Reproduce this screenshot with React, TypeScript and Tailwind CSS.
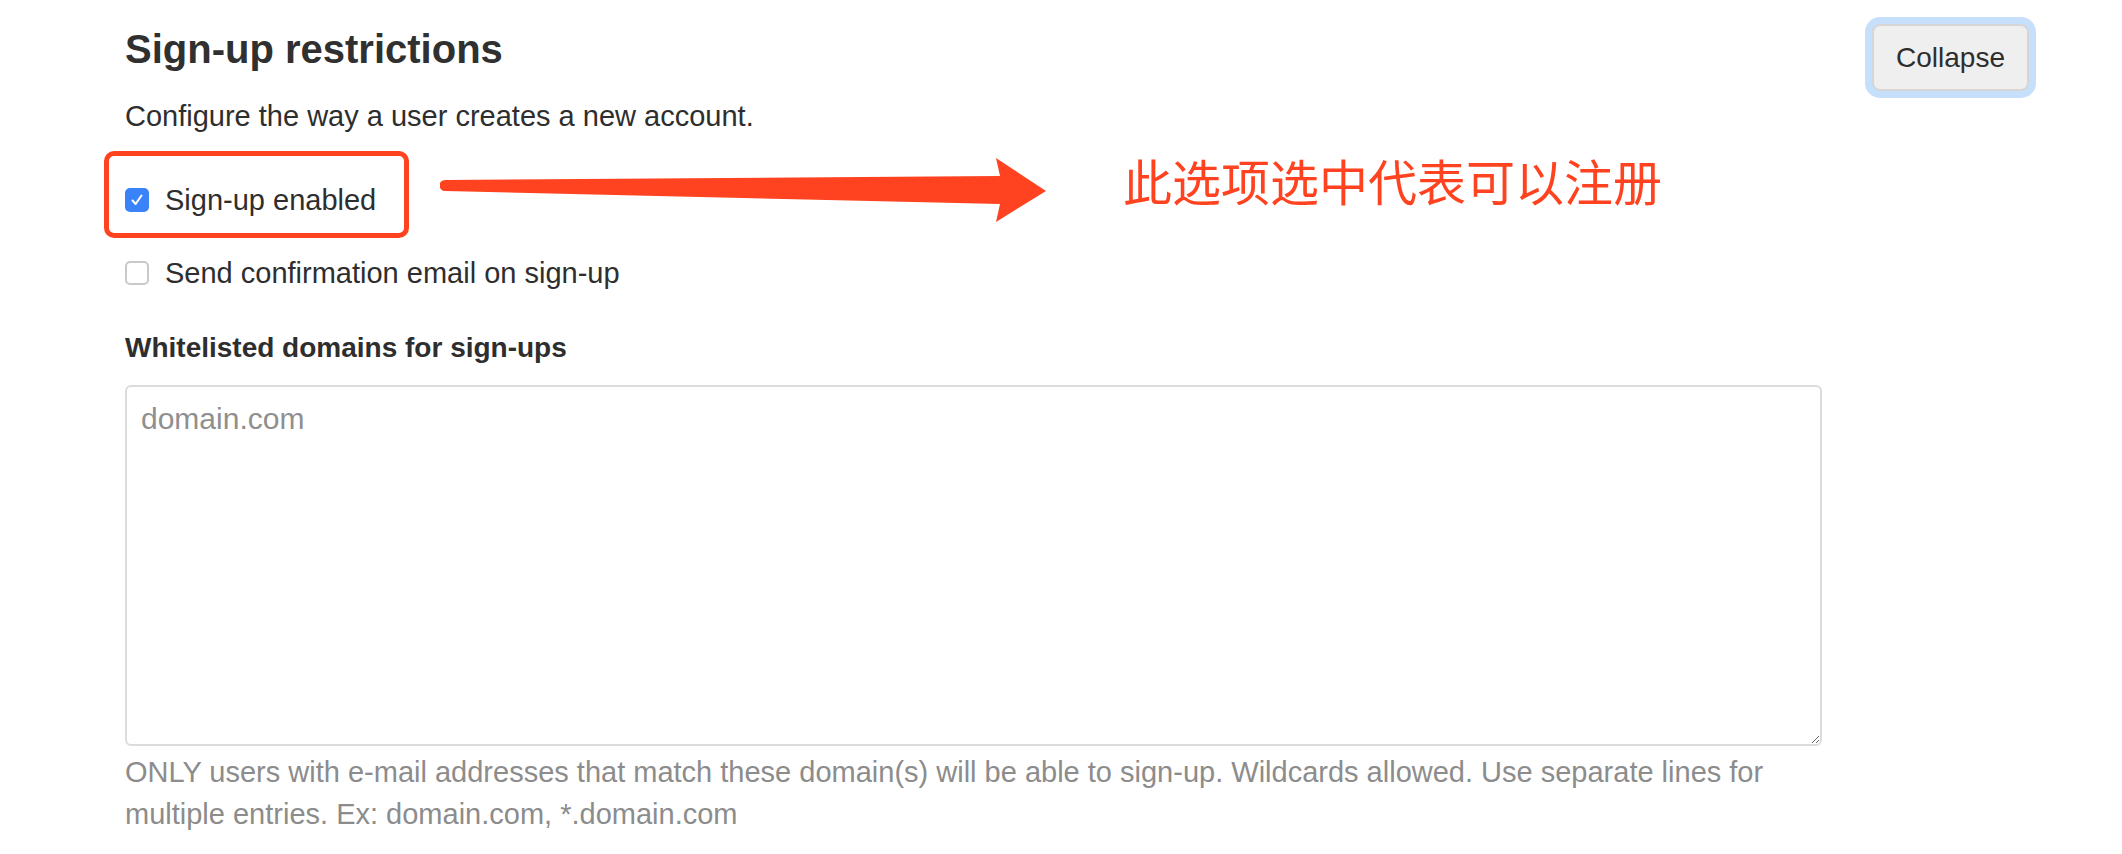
function CheckBox({ checked }: { checked: boolean }) {
  if (checked) {
    return (
      <span className="flex h-[24px] w-[24px] shrink-0 items-center justify-center rounded-[5px] bg-[#3a82f7]">
        <svg width="14" height="14" viewBox="0 0 14 14" fill="none">
          <path d="M2.5 7.5 L5.6 11 L11.5 2.5" stroke="white" strokeWidth="2" strokeLinecap="round" strokeLinejoin="round" />
        </svg>
      </span>
    );
  }
  return <span className="h-[24px] w-[24px] shrink-0 rounded-[5px] border-2 border-[#c9c9c9] bg-white" />;
}

export default function App() {
  return (
    <div className="relative h-[854px] w-full overflow-hidden bg-white font-['Liberation_Sans',Arial,sans-serif] text-[#2e2e2e]">
      <div className="pl-[125px] pr-[93px] pt-[24px]">
        <div className="flex items-start justify-between">
          <h2 className="mt-[1px] text-[40px] font-bold leading-[48px] text-[#303030]">Sign-up restrictions</h2>
          <button className="rounded-[8px] border-2 border-[#d6d6d6] bg-[#efefef] px-[22px] text-[28px] leading-[63px] text-[#2e2e2e] shadow-[0_0_0_7px_#c6e0fb]">
            Collapse
          </button>
        </div>

        <div className="w-[1697px]">
          <p className="mt-[4px] text-[29px] leading-[42px]">Configure the way a user creates a new account.</p>

          <label className="mt-[42px] flex items-center gap-[16px] text-[29px] leading-[42px]">
            <CheckBox checked />
            <span>Sign-up enabled</span>
          </label>

          <label className="mt-[31px] flex items-center gap-[16px] text-[29px] leading-[42px]">
            <CheckBox checked={false} />
            <span>Send confirmation email on sign-up</span>
          </label>

          <div className="mt-[33px] text-[28px] font-bold leading-[42px]">Whitelisted domains for sign-ups</div>

          <textarea
            className="mt-[16px] block h-[361px] w-full rounded-[6px] border-2 border-[#dcdcdc] bg-white px-[14px] py-[11px] font-['Liberation_Sans',Arial,sans-serif] text-[30px] leading-[42px] outline-none placeholder:text-[#8f8f8f]"
            placeholder="domain.com"
          />

          <p className="mt-[5px] text-[29px] leading-[42px] text-[#8c8c8c]">
            ONLY users with e-mail addresses that match these domain(s) will be able to sign-up. Wildcards allowed. Use separate lines for multiple entries. Ex: domain.com, *.domain.com
          </p>
        </div>
      </div>

      {/* annotation overlay */}
      <div className="absolute left-[104px] top-[151px] h-[87px] w-[305px] rounded-[10px] border-[5px] border-[#ff4320]" />
      <svg className="absolute left-[440px] top-[150px]" width="612" height="80" viewBox="0 0 612 80">
        <path
          d="M5 30 L560 26 L556 8 L606 41 L556 72 L560 54 L5 41 A5.5 5.5 0 0 1 5 30 Z"
          fill="#ff4320"
        />
      </svg>
      <div className="absolute left-[1123px] top-[155px] font-['Noto_Sans_CJK_SC',sans-serif] text-[49px] leading-none text-[#ff4320]">
        此选项选中代表可以注册
      </div>
    </div>
  );
}
